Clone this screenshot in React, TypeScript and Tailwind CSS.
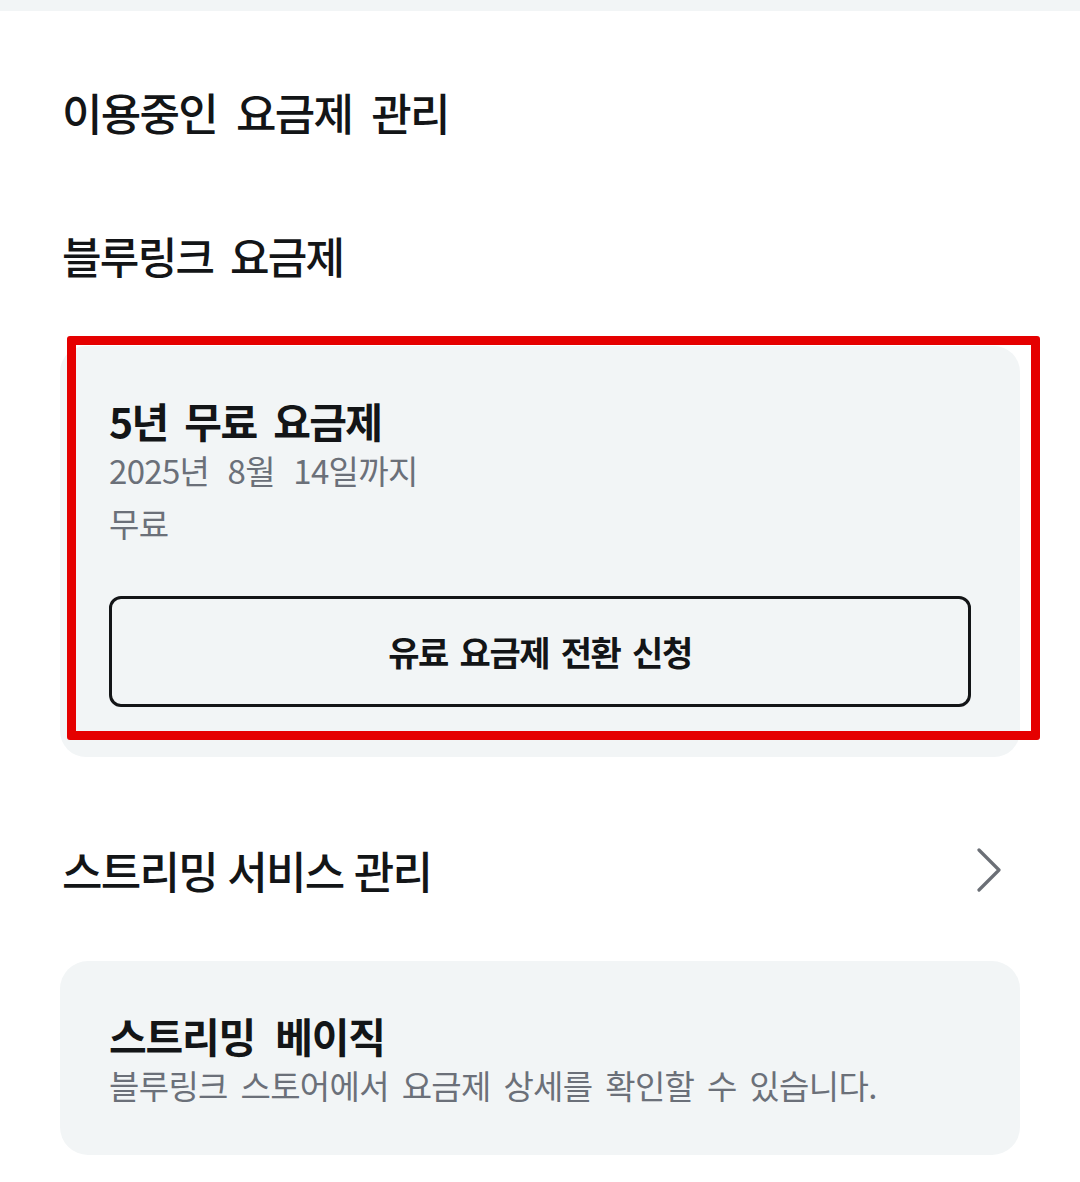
import React from "react";

const font = { fontFamily: '"Noto Sans CJK KR", "Noto Sans", sans-serif' };

export default function App() {
  return (
    <div className="w-[1080px] min-h-[1182px] bg-white text-[#131517]" style={font}>
      <div className="h-[11px] bg-[#f2f5f6]" />
      <h1 className="mt-[71px] pl-[62px] text-[44px] leading-[60px] font-medium tracking-[-0.04em] [word-spacing:0.25em]">
        이용중인 요금제 관리
      </h1>
      <h2 className="mt-[83px] pl-[62px] text-[43px] leading-[60px] font-medium tracking-[-0.04em] [word-spacing:0.2em]">
        블루링크 요금제
      </h2>
      <div className="relative mx-[60px] mt-[61px] rounded-[26px] bg-[#f2f5f6] px-[49px] pt-[49px] pb-[50px]">
        <div className="text-[41px] leading-[50px] font-bold tracking-[-0.04em] [word-spacing:0.22em]">5년 무료 요금제</div>
        <div className="mt-[3px] text-[33px] leading-[44px] text-[#6b7079] tracking-[-0.02em] [word-spacing:0.35em]">2025년 8월 14일까지</div>
        <div className="mt-[9px] text-[33px] leading-[44px] text-[#6b7079] tracking-[-0.02em]">무료</div>
        <button className="mt-[51px] flex h-[111px] w-[862px] items-center justify-center rounded-[12px] border-[3px] border-[#131517] text-[34px] font-bold tracking-[-0.04em] [word-spacing:0.15em]">
          유료 요금제 전환 신청
        </button>
        <div className="pointer-events-none absolute left-[7px] top-[-10px] right-[-20px] bottom-[17px] rounded-[3px] border-[9px] border-[#e50000]" />
      </div>
      <div className="mt-[83px] flex items-center justify-between pl-[62px] pr-[79px]">
        <h2 className="text-[44px] leading-[60px] font-medium tracking-[-0.04em] [word-spacing:0.05em]">스트리밍 서비스 관리</h2>
        <svg width="24" height="44" viewBox="0 0 24 44" fill="none">
          <polyline points="2,2 22,22 2,42" stroke="#6b6f76" strokeWidth="3.2" strokeLinecap="round" strokeLinejoin="round" />
        </svg>
      </div>
      <div className="mx-[60px] mt-[61px] rounded-[28px] bg-[#f2f5f6] px-[49px] pt-[49px] pb-[48px]">
        <div className="text-[41px] leading-[50px] font-bold tracking-[-0.03em] [word-spacing:0.3em]">스트리밍 베이직</div>
        <div className="mt-[3px] text-[33px] leading-[44px] text-[#6b7079] tracking-[-0.02em] [word-spacing:0.18em]">
          블루링크 스토어에서 요금제 상세를 확인할 수 있습니다.
        </div>
      </div>
    </div>
  );
}
